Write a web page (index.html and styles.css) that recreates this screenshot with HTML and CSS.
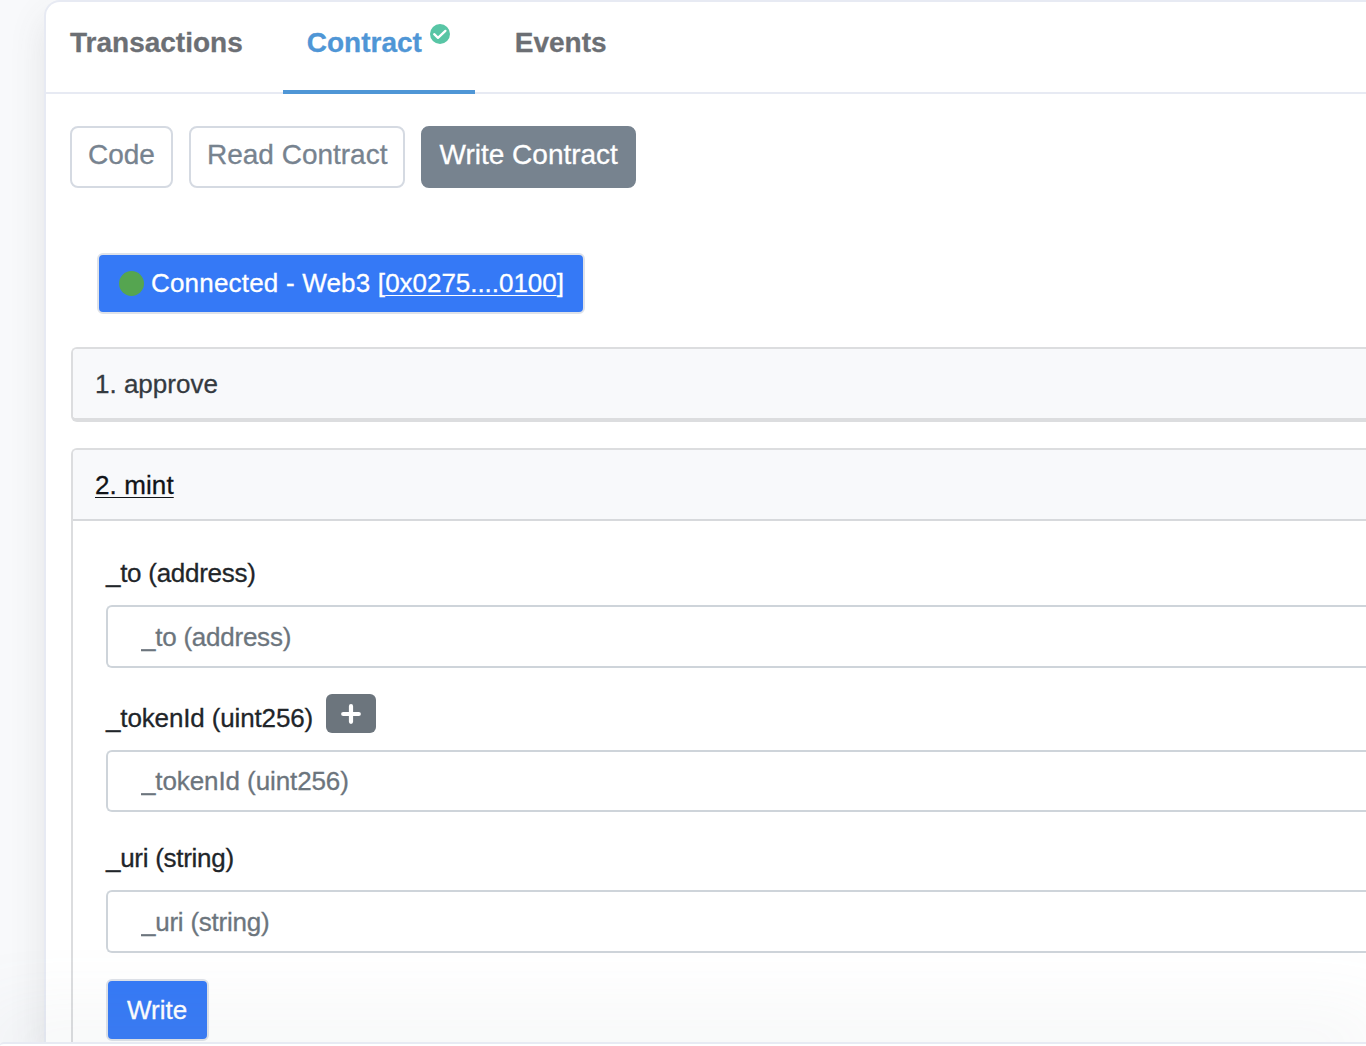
FILE: index.html
```
<!DOCTYPE html>
<html lang="en">
<head>
  <meta charset="UTF-8">
  <meta name="viewport" content="width=device-width, initial-scale=1.0">
  <title>Write Contract</title>
  <link rel="stylesheet" href="styles.css">
</head>
<body>
  <main class="card">
    <nav class="tabs">
      <a class="tab">Transactions</a>
      <a class="tab active">
        Contract
        <svg class="verified" viewBox="0 0 20 20">
          <circle cx="10" cy="10" r="10" fill="#58c5a5"/>
          <path d="M4.2 10.2 L8 13.8 L15.4 6.9" fill="none" stroke="#fff" stroke-width="2.3" stroke-linecap="round" stroke-linejoin="round"/>
        </svg>
      </a>
      <a class="tab">Events</a>
    </nav>
    <div class="card-body">
      <div class="pills">
        <button class="pill">Code</button>
        <button class="pill">Read Contract</button>
        <button class="pill active">Write Contract</button>
      </div>
      <button class="btn connect"><span class="dot"></span><span class="connect-text">Connected - Web3 [<span class="address">0x0275....0100</span>]</span></button>
      <section class="method closed">
        <div class="method-header">1. approve</div>
      </section>
      <section class="method expanded">
        <div class="method-header open"><a>2. mint</a></div>
        <form class="method-form">
          <label>_to (address)</label>
          <input class="input-to" type="text" placeholder="_to (address)">
          <div class="label-row">
            <label class="label-token">_tokenId (uint256)</label>
            <button class="plus" type="button">
              <svg width="20" height="20" viewBox="0 0 20 20">
                <path d="M10 2.2 V17.8 M2.2 10 H17.8" stroke="#fff" stroke-width="4.2" stroke-linecap="round"/>
              </svg>
            </button>
          </div>
          <input class="input-token" type="text" placeholder="_tokenId (uint256)">
          <label class="label-uri">_uri (string)</label>
          <input class="input-uri" type="text" placeholder="_uri (string)">
          <button class="btn write" type="button">Write</button>
        </form>
      </section>
    </div>
  </main>
  <div class="bottom-bar"></div>
</body>
</html>
```
FILE: styles.css
```
* {
  box-sizing: border-box;
}
body {
  margin: 0;
  height: 1046px;
  overflow: hidden;
  background: #f8f9fb;
  color: #212529;
  font-family: "Liberation Sans", Arial, sans-serif;
  font-size: 26px;
  -webkit-text-stroke: 0.3px;
}
button, input {
  font-family: inherit;
  font-size: inherit;
  -webkit-text-stroke: 0.3px;
}
.card {
  display: flex;
  flex-direction: column;
  height: 1046px;
  margin-left: 44px;
  background: #fff;
  border: 2px solid #e7eaf3;
  border-width: 2px 0 0 2px;
  border-radius: 16px 0 0 0;
  box-shadow: 0 16px 36px rgba(80, 82, 86, 0.12);
}
.tabs {
  display: flex;
  flex: none;
  gap: 16px;
  height: 92px;
  border-bottom: 2px solid #e7eaf3;
}
.tab {
  display: flex;
  height: 92px;
  padding: 24px 24px 0;
  font-size: 28px;
  font-weight: bold;
  line-height: 33px;
  color: #6c6f74;
}
.tab.active {
  width: 192px;
  color: #4f96d6;
  border-bottom: 4px solid #4f96d6;
}
.verified {
  flex: none;
  width: 20px;
  height: 20px;
  margin: -2px 0 0 8px;
}
.card-body {
  display: flex;
  flex: 1;
  flex-direction: column;
  min-height: 0;
  padding: 32px 0 0 24px;
}
.pills {
  display: flex;
  gap: 16px;
}
.pill {
  height: 62px;
  padding: 0 16px 5px;
  font-size: 28px;
  color: #77838f;
  background: #fff;
  border: 2px solid #d5dae2;
  border-radius: 8px;
}
.pill.active {
  color: #fff;
  background: #77838f;
  border-color: #77838f;
}
.btn {
  display: flex;
  flex: none;
  align-items: center;
  padding: 0 18px;
  height: 61px;
  color: #fff;
  background: #3579f6;
  border: 2px solid #dee2e9;
  border-radius: 6px;
  white-space: nowrap;
}
.connect {
  width: 488px;
  margin: 65px 0 0 27px;
  padding: 0 0 1px 20px;
}
.connect-text {
  letter-spacing: 0.19px;
}
.dot {
  flex: none;
  width: 25px;
  height: 25px;
  margin-right: 7px;
  border-radius: 50%;
  background: #55a550;
}
.address, .method-header a {
  text-decoration: underline;
  text-decoration-thickness: 1px;
  text-decoration-skip-ink: none;
  text-underline-offset: 3px;
}
.address {
  letter-spacing: -0.04px;
}
.method {
  margin: 26px 0 0 1px;
  border: 2px solid #dcdddf;
  border-right: none;
  border-radius: 6px 0 0 6px;
}
.method.closed {
  margin-top: 33px;
  border-bottom-width: 4px;
}
.method.expanded {
  flex: 1;
  min-height: 0;
  border-bottom: none;
  border-radius: 6px 0 0 0;
}
.method-header {
  height: 69px;
  padding: 20px 0 0 22px;
  line-height: 30px;
  background: #f8f9fb;
  color: #343a40;
  border-radius: 4px 0 0 4px;
}
.method-header.open {
  height: 71px;
  border-bottom: 2px solid #d7d9dc;
  border-radius: 4px 0 0 0;
}
.method-header a {
  color: #111418;
  letter-spacing: 0.1px;
}
.method-form {
  display: flex;
  flex-direction: column;
  align-items: flex-start;
  padding: 37px 0 0 33px;
}
.method-form label {
  line-height: 30px;
  letter-spacing: -0.28px;
}
.method-form .label-token {
  letter-spacing: -0.14px;
}
.method-form input {
  width: 100%;
  height: 62px;
  padding: 0 0 0 33px;
  background: transparent;
  border: 2px solid #ced4da;
  border-right: none;
  border-radius: 6px 0 0 6px;
}
.method-form input::placeholder {
  color: #6c757d;
  opacity: 1;
  letter-spacing: -0.24px;
}
.method-form .input-to {
  height: 63px;
  margin-top: 17px;
  padding-top: 1px;
}
.label-row {
  display: flex;
  align-items: flex-end;
  gap: 13px;
  height: 39px;
  margin-top: 26px;
}
.plus {
  display: flex;
  align-items: center;
  justify-content: center;
  width: 50px;
  height: 39px;
  padding: 0;
  background: #6c757d;
  border: none;
  border-radius: 6px;
}
.input-token {
  margin-top: 17px;
}
.method-form .input-token::placeholder {
  letter-spacing: -0.1px;
}
.label-uri {
  margin-top: 31px;
}
.method-form .input-uri {
  height: 63px;
  margin-top: 17px;
  padding-top: 1px;
}
.write {
  width: 103px;
  height: 62px;
  margin-top: 26px;
  padding-left: 19px;
}
/* shadow fades up over the end of the form */
.bottom-bar {
  position: fixed;
  left: 0;
  right: 0;
  bottom: 0;
  height: 4px;
  background: #fff;
  border-top: 2px solid #e7eaf3;
  border-radius: 12px 0 0 0;
  box-shadow: 0 0 80px 20px rgba(140, 152, 164, 0.13);
}
```
